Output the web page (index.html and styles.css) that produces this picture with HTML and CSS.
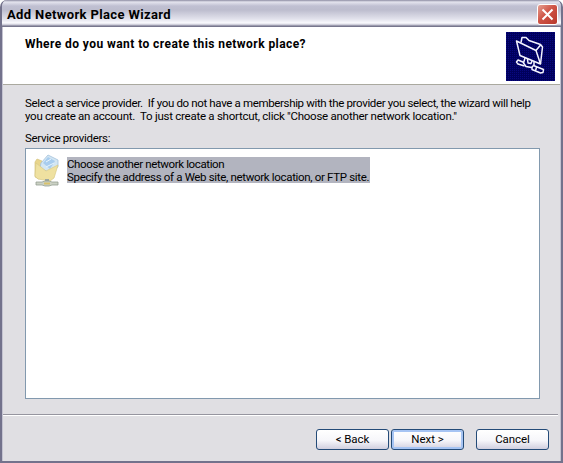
FILE: index.html
```html
<!DOCTYPE html>
<html lang="en">
<head>
<meta charset="utf-8">
<title>Add Network Place Wizard</title>
<link rel="stylesheet" href="styles.css">
</head>
<body>
<div class="window">
  <header class="titlebar">
    <span class="title">Add Network Place Wizard</span>
    <button class="close" aria-label="Close"><svg width="13" height="13" viewBox="0 0 13 13"><path d="M1.5 1.5L11.5 11.5M11.5 1.5L1.5 11.5" stroke="#fff" stroke-width="2"/></svg></button>
  </header>
  <section class="banner">
    <h1>Where do you want to create this network place?</h1>
    <svg class="banner-icon" width="49" height="49" viewBox="0 0 49 49">
      <defs><pattern id="dots" width="2" height="2" patternUnits="userSpaceOnUse"><rect width="2" height="2" fill="#00005c"/><rect width="1" height="1" fill="#080880"/></pattern></defs>
      <rect width="49" height="49" fill="url(#dots)"/>
      <g fill="none" stroke="#f4f4ff" stroke-width="1.5" stroke-linejoin="round">
        <path d="M10.5 9L30 18.5L34.5 32L14 23.5Z"/>
        <path d="M15 10.5L16 5.5L20 5.5L23 8.5L34.5 12.5L36.5 15L34.5 32M30 18.5L34.5 13"/>
        <path d="M19 26L17.5 31L20 34.5L25.5 35.5L28 33L28 29.5M21.5 27L22 31L25 31.5L26 29"/>
        <path d="M18 30.5L12 28L10.5 30L12 32L18.5 34M27.5 33.5L37.5 37.5L37 40.5L34.5 41L26 37.5L26 35M30.5 35L29.5 39"/>
      </g>
    </svg>
  </section>
  <main class="body">
    <p class="intro"><span class="l1">Select a service provider.&nbsp; If you do not have a membership with the provider you select, the wizard will help</span><span class="l2">you create an account.&nbsp; To just create a shortcut, click "Choose another network location."</span></p>
    <div class="label">Service providers:</div>
    <div class="list">
      <svg class="place-icon" width="26" height="34" viewBox="0 0 26 34">
        <path d="M1 8L3 5L8 7L12 18L5 25L1 23Z" fill="#e9d58b" stroke="#d5c47e" stroke-width=".7"/>
        <path d="M7 9L14 1L24 6L24 13L16 19L6 14Z" fill="#d3e6f3" stroke="#a4c2dc" stroke-width=".8"/>
        <path d="M9 9L14 3L21 7L16 15Z" fill="#a8cdef"/>
        <path d="M12 8L17 5M12 13L20 9" stroke="#e8f5fc"/>
        <path d="M2 9L12 17L24 11L20 24L16 27L4 25L1 22Z" fill="#efe1a0" stroke="#d9ca86" stroke-width=".7"/>
        <path d="M11 25H15V29H11Z" fill="#9da8a1"/>
        <path d="M2 28H8L11 27H15L18 28H24V31H18L15 32H11L8 31H2Z" fill="#cbd1c4" stroke="#96a092" stroke-width=".8"/>
        <path d="M10 29.5H16" stroke="#d9c26c" stroke-width="2"/>
      </svg>
      <div class="choice"><span class="c1">Choose another network location</span><span class="c2">Specify the address of a Web site, network location, or FTP site.</span></div>
    </div>
  </main>
  <footer class="actions">
    <button class="btn back">&lt; Back</button>
    <button class="btn next">Next &gt;</button>
    <button class="btn cancel">Cancel</button>
  </footer>
</div>
</body>
</html>
```
FILE: styles.css
```css
* { box-sizing: border-box; }
body { margin: 0; background: #fff; font: 11.5px/13px Roboto, "Liberation Sans", sans-serif; color: #000; overflow: hidden; }
.window { width: 563px; height: 463px; border: solid #73728c; border-width: 0 2px 2px; box-shadow: inset 1px 0 #c4c3d1, inset -1px 0 #c4c3d1; border-radius: 7px 7px 0 0; background: #e0dfe3; overflow: hidden; display: flex; flex-direction: column; }
.titlebar { height: 27px; flex: none; padding: 2px 3px 0 5px; display: flex; justify-content: space-between; align-items: center; background: linear-gradient(#8d8ca2 0, #e4e4ee 2px, #c0c0d2 6px, #bdbdce 10px, #e2e2ec 19px, #fafafe 23px, #c2c1d0 25px, #77768d 26px); }
.title { font: bold 13px/18px Roboto, sans-serif; letter-spacing: .37px; white-space: nowrap; }
.close { width: 21px; height: 21px; padding: 0; margin-top: -1px; border: 1px solid #fff; border-radius: 3px; background: linear-gradient(135deg, #e6a092, #cf5446 45%, #b8382c); display: flex; align-items: center; justify-content: center; }
.banner { height: 58px; flex: none; margin: 0 1px; padding: 5px 5px 0 22px; background: #fff; border-bottom: 1px solid #aaa99f; display: flex; justify-content: space-between; }
h1 { margin: 5px 0 0; font: bold 12px/14px Roboto, sans-serif; letter-spacing: .43px; white-space: nowrap; }
.banner-icon { display: block; }
.body { height: 329px; flex: none; padding: 12px 21px 0 23px; }
.intro { margin: 0; }
.intro span, .choice span { display: block; white-space: nowrap; }
.l1 { letter-spacing: -.35px; }
.l2 { letter-spacing: -.26px; }
.label { margin: 9px 0 3px; letter-spacing: -.3px; }
.list { width: 515px; height: 251px; border: 1px solid #8299ae; background: #fff; display: flex; padding: 5px 0 0 8px; }
.place-icon { flex: none; margin-right: 7px; }
.choice { width: 303px; height: 26px; margin-top: 3px; padding-top: 1px; line-height: 12.5px; background: #b2b4bf; }
.c1 { letter-spacing: -.38px; }
.c2 { letter-spacing: -.33px; }
.actions { flex: 1; margin: 0 3px 0 1px; border-top: 1px solid #96959f; box-shadow: inset 0 1px #fff; padding: 14px 9px 0 0; display: flex; justify-content: flex-end; }
.btn { width: 73px; height: 21px; padding: 0; border: 1px solid #244b78; border-radius: 3px; background: linear-gradient(#fff, #f6f6fa 55%, #d1cfdf); color: #000; font: 11.5px/19px Roboto, sans-serif; letter-spacing: -.05px; }
.next { margin: 0 12px 0 2px; box-shadow: inset 0 0 0 2px #a6c4f3; }
```
